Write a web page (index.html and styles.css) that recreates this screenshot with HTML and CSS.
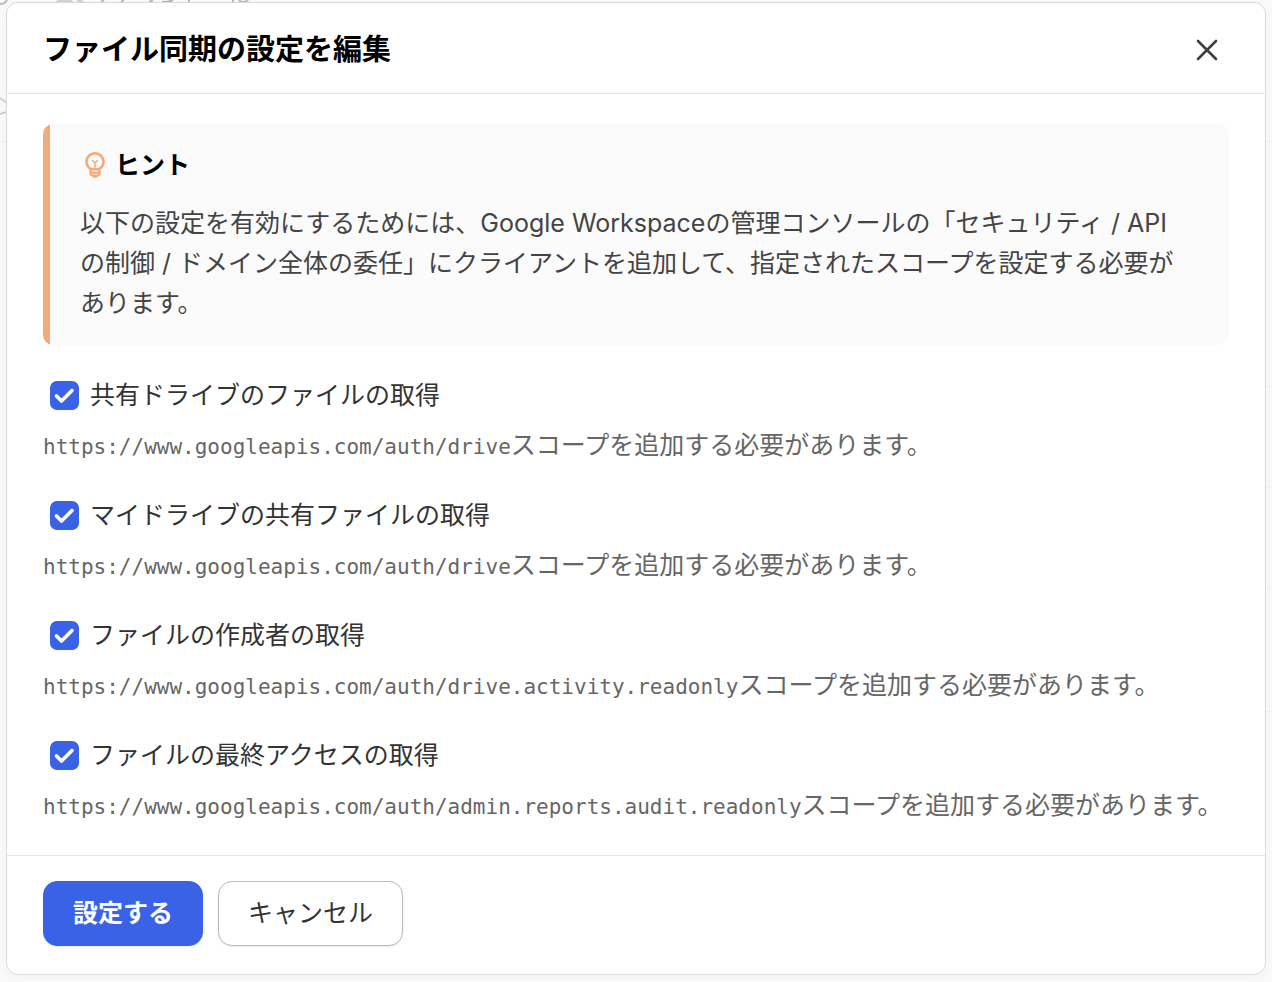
FILE: index.html
```html
<!DOCTYPE html>
<html lang="ja">
<head>
    <meta charset="UTF-8">
    <meta name="viewport" content="width=device-width, initial-scale=1.0">
    <title>ファイル同期の設定を編集</title>
    <link rel="stylesheet" href="styles.css">
</head>
<body>

<!-- 背面のページ -->
<svg class="backdrop" width="260" height="150" aria-hidden="true">
    <path d="M0 4q5 0 7-4" stroke="#bdbdbd" stroke-width="2" fill="none"/>
    <path d="M55 2l3-2h13l3 2zM77 2v-2h5l3 2z" fill="#d2d2d2"/>
    <path d="M101 2l3-2M121 2l3-2M149 2l4-2M162 2q8 0 11-2M189 0v2M233 0v2M239 0q1 2 4 2t5-2" stroke="#b8b8b8" stroke-width="2" fill="none"/>
    <path d="M0 98l7 5M0 114l7-2" stroke="#cfcfcf" stroke-width="2" fill="none"/>
    <path d="M0 141.500h7" stroke="#f0f0f0"/>
</svg>
<svg class="backdrop backdrop-right" width="12" height="720" aria-hidden="true">
    <path d="M0 141.500h12M0 386h12M0 487h12M0 587.500h12M0 711.500h12" stroke="#f2f2f2"/>
</svg>

<div class="modal" role="dialog" aria-labelledby="modalTitle">
    <header class="modal-header">
        <h1 id="modalTitle">ファイル同期の設定を編集</h1>
        <button type="button" class="close" aria-label="閉じる">
            <svg width="24" height="24" viewBox="0 0 24 24" fill="none" stroke="#404040" stroke-width="2.600" stroke-linecap="round">
                <path d="M3 3l18 18M21 3L3 21"/>
            </svg>
        </button>
    </header>

    <form id="syncForm">
        <div class="modal-body">
            <section class="hint">
                <h2>
                    <svg width="20" height="28" viewBox="0 0 20 28" fill="none" stroke="#f4ab7c" stroke-width="2.600" stroke-linejoin="round" stroke-linecap="round">
                        <path d="M6 18.200A8.500 8.500 0 1 1 14 18.200z"/>
                        <path d="M7.500 9.500L10 12l2.500-2.500M10 12v6" stroke-width="1.500"/>
                        <path d="M5.500 18v5.500l2.500 1.200h4l2.500-1.200V18M6 21.600h8" stroke-width="2.200"/>
                        <path d="M9 25.500h2"/>
                    </svg>
                    ヒント
                </h2>
                <p>以下の設定を有効にするためには、Google Workspaceの管理コンソールの「セキュリティ / APIの制御 / ドメイン全体の委任」にクライアントを追加して、指定されたスコープを設定する必要があります。</p>
            </section>

            <div class="option">
                <label for="sharedDrive"><input type="checkbox" id="sharedDrive" checked>共有ドライブのファイルの取得</label>
                <p><code>https://www.googleapis.com/auth/drive</code>スコープを追加する必要があります。</p>
            </div>
            <div class="option">
                <label for="myDrive"><input type="checkbox" id="myDrive" checked>マイドライブの共有ファイルの取得</label>
                <p><code>https://www.googleapis.com/auth/drive</code>スコープを追加する必要があります。</p>
            </div>
            <div class="option">
                <label for="creator"><input type="checkbox" id="creator" checked>ファイルの作成者の取得</label>
                <p><code>https://www.googleapis.com/auth/drive.activity.readonly</code>スコープを追加する必要があります。</p>
            </div>
            <div class="option">
                <label for="lastAccess"><input type="checkbox" id="lastAccess" checked>ファイルの最終アクセスの取得</label>
                <p><code>https://www.googleapis.com/auth/admin.reports.audit.readonly</code>スコープを追加する必要があります。</p>
            </div>
        </div>

        <footer class="modal-footer">
            <button type="submit" class="btn btn-primary">設定する</button>
            <button type="button" class="btn">キャンセル</button>
        </footer>
    </form>
</div>

</body>
</html>
```
FILE: styles.css
```css
* {
    box-sizing: border-box;
}

body {
    font-family: Inter, "Noto Sans CJK JP", sans-serif;
    font-size: 25px;
    line-height: 40px;
    margin: 0;
    padding: 2px 6px 6px;
    background-color: #fafafa;
    color: #333;
}

h1, h2, p {
    margin: 0;
}

.backdrop {
    position: absolute;
    top: 0;
    left: 0;
}

.backdrop-right {
    left: auto;
    right: 0;
}

.modal {
    position: relative;
    background-color: white;
    border: 1px solid #dadada;
    border-radius: 12px;
    box-shadow: 0 4px 16px rgba(0, 0, 0, 0.03);
}

.modal-header {
    display: flex;
    justify-content: space-between;
    align-items: center;
    padding: 27px 36px 23px;
    border-bottom: 1px solid #e5e5e5;
}

.modal-header h1 {
    font-size: 29px;
    font-weight: bold;
    color: black;
}

.close {
    display: flex;
    padding: 8px 10px;
    border: none;
    background: none;
}

.modal-body {
    padding: 30px 36px;
}

.hint {
    margin-bottom: 30px;
    padding: 21px 44px 22px 37px;
    background: linear-gradient(to right, #f4ab7c 7px, #fbfbfb 7px);
    border-radius: 10px;
}

.hint h2 {
    display: flex;
    align-items: center;
    gap: 10px;
    margin-bottom: 18px;
    padding-left: 5px;
    font-size: 25px;
    font-weight: bold;
    color: black;
}

.hint p {
    color: #444;
}

.option {
    margin-bottom: 30px;
}

.option:last-child {
    margin-bottom: 0;
}

.option label {
    display: flex;
    align-items: center;
    gap: 11px;
    margin-bottom: 10px;
    padding-left: 7px;
}

.option input {
    appearance: none;
    width: 29px;
    height: 29px;
    margin: 0;
    border-radius: 7px;
}

.option input:checked {
    background: #3962e6 url('data:image/svg+xml,<svg xmlns="http://www.w3.org/2000/svg" viewBox="0 0 29 29"><path d="M6.500 15l5 5L22 9.500" fill="none" stroke="white" stroke-width="3.600" stroke-linecap="round" stroke-linejoin="round"/></svg>');
}

.option p {
    color: #666;
}

.option code {
    font-family: "DejaVu Sans Mono", monospace;
    font-size: 21px;
    line-height: 1;
}

.modal-footer {
    display: flex;
    gap: 15px;
    padding: 25px 36px 28px;
    border-top: 1px solid #e5e5e5;
}

.btn {
    padding: 11px 29px;
    font: inherit;
    line-height: 41px;
    color: #333;
    background-color: white;
    border: 1px solid #bbb;
    border-radius: 14px;
    box-shadow: 0 1px 2px rgba(0, 0, 0, 0.08);
}

.btn-primary {
    font-weight: bold;
    color: white;
    background-color: #3962e6;
    border-color: #3962e6;
}
```
